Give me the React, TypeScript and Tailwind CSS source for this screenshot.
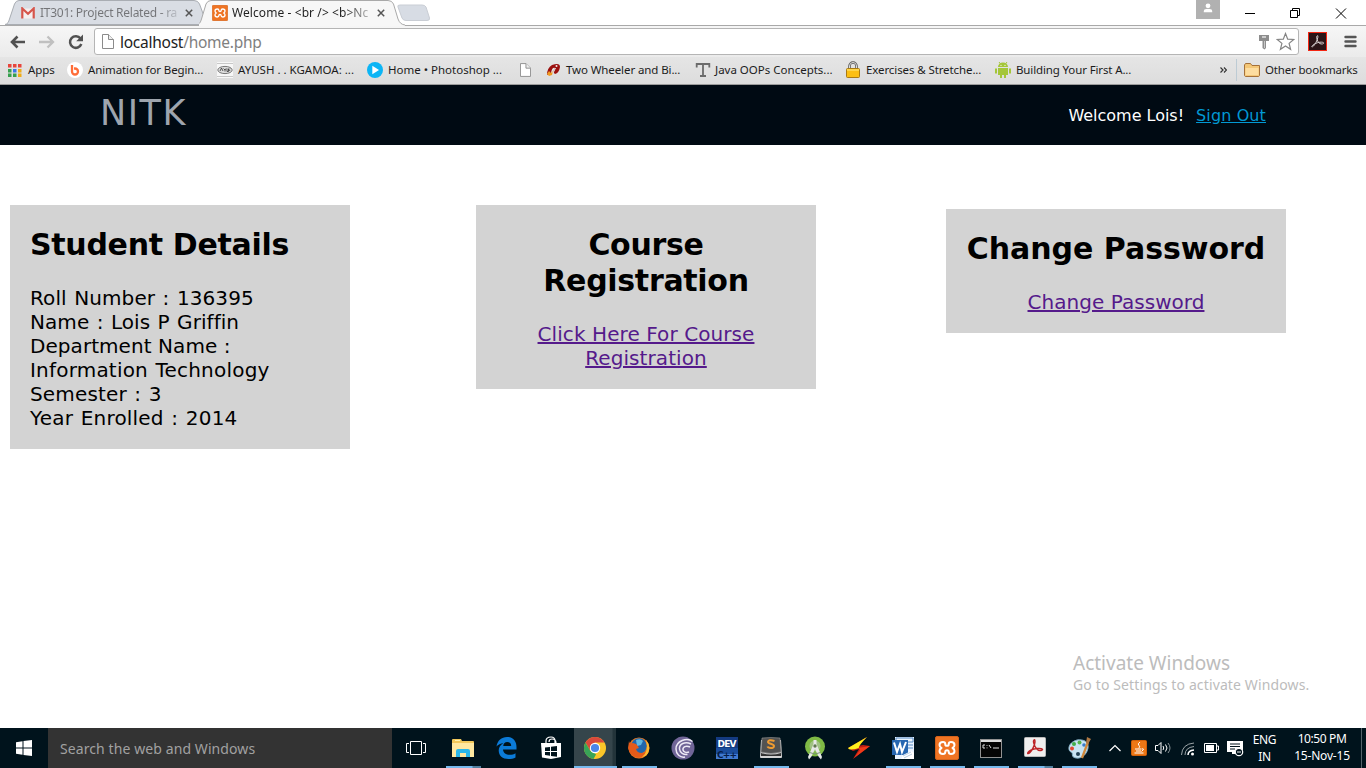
import type { ReactNode } from "react";

const UI = "font-['Noto_Sans','Open_Sans',sans-serif]";
const WEB = "font-['DejaVu_Sans',sans-serif]";

function Xampp({ size }: { size: number }) {
  return (
    <svg className="shrink-0" width={size} height={size} viewBox="0 0 24 24">
      <rect x=".5" y=".5" width="23" height="23" rx="1.500" fill="#ef7423" stroke="#d4631b" />
      <path d="M8 6Q4.500 6 4.500 9Q4.500 11 6.500 12Q4.500 13 4.500 15Q4.500 18 8 18Q10.300 18 10.300 15.800Q10.300 14.200 12 14.200T13.700 15.800Q13.700 18 16 18Q19.500 18 19.500 15Q19.500 13 17.500 12Q19.500 11 19.500 9Q19.500 6 16 6Q13.700 6 13.700 8.200Q13.700 9.800 12 9.800T10.300 8.200Q10.300 6 8 6z" fill="none" stroke="#fff" strokeWidth="2" strokeLinejoin="round" />
    </svg>
  );
}

function Page({ className = "" }: { className?: string }) {
  return (
    <svg className={className} width="12" height="15" viewBox="0 0 12 15">
      <path d="M.5.5h6l5 5v9H.5z" fill="#fff" stroke="#8b8b8b" />
      <path d="M6.500.5v5h5" fill="#eee" stroke="#8b8b8b" />
    </svg>
  );
}

function CloseX() {
  return (
    <svg width="8" height="8" viewBox="0 0 8 8">
      <path d="M.8.8l6.400 6.400M7.200.8L.8 7.200" stroke="#555" strokeWidth="1.500" />
    </svg>
  );
}

function TitleBar() {
  return (
    <div className="relative z-10 flex h-[25px] bg-white">
      <div className="relative ml-[5px] h-[25px] w-[194px] shrink-0">
        <svg className="absolute top-0 left-0" width="202" height="25" viewBox="0 0 202 25">
          <path d="M0 24.500C3 24 3.500 22 4.500 19L9.500 4Q11 .5 14 .5H189Q193 .5 194.500 4L200 19Q201 22 202 24.500z" fill="#d9dde4" stroke="#a9adb3" />
        </svg>
        <div className="relative flex h-[25px] items-center pl-[16px]">
          <svg width="14" height="12" viewBox="0 0 14 12">
            <path d="M1 1.500h12v10H1z" fill="#f5efef" />
            <path d="M1.300 11.500V1.500L7 6.700l5.700-5.200v10" fill="none" stroke="#d6554b" strokeWidth="2.200" />
          </svg>
          <div className={`${UI} ml-[5px] w-[139px] bg-gradient-to-r from-[#737477] from-85% to-[#c4c8d0] bg-clip-text text-[12px] tracking-[-0.26px] whitespace-nowrap text-transparent`}>
            IT301: Project Related - ra
          </div>
          <div className="ml-[6px]"><CloseX /></div>
        </div>
      </div>
      <div className="relative h-[25px] w-[196px] shrink-0">
        <svg className="absolute top-0 left-0" width="206" height="26" viewBox="0 0 206 26">
          <path d="M-3 25C1 24 1.500 22 2.500 19L7 4Q8.500.5 12 .5H189Q193 .5 194.500 4L199 19Q201 24.500 206 25V26H-3z" fill="#f7f7f7" />
          <path d="M-3 25C1 24 1.500 22 2.500 19L7 4Q8.500.5 12 .5H189Q193 .5 194.500 4L199 19Q201 24.500 206 25" fill="none" stroke="#a9a9a9" />
        </svg>
        <div className="relative flex h-[25px] items-center pl-[13px]">
          <Xampp size={16} />
          <div className={`${UI} ml-[4px] w-[139px] bg-gradient-to-r from-[#202020] from-80% to-[#c8c8c8] bg-clip-text text-[12px] tracking-[0.08px] whitespace-nowrap text-transparent`}>
            Welcome - &lt;br /&gt; &lt;b&gt;Nc
          </div>
          <div className="ml-[6px]"><CloseX /></div>
        </div>
      </div>
      <svg className="mt-[4px] ml-[2px] shrink-0" width="34" height="18" viewBox="0 0 34 18">
        <path d="M3 1H25Q28 1 29 3L32.500 14Q33 16.500 30 16.500H9Q6 16.500 5 14L1 3Q0 1 3 1z" fill="#d7dce4" stroke="#c9cdd4" />
      </svg>
      <div className="flex-1" />
      <div className="mr-[24px] flex h-[19px] w-[24px] shrink-0 justify-center bg-[#b1b1b1] pt-[3px]">
        <svg width="10" height="10" viewBox="0 0 10 10" fill="#fff">
          <circle cx="5" cy="2.800" r="2.400" />
          <path d="M.8 9.200V8q0-2 2.500-2h3.400q2.500 0 2.500 2v1.200z" />
        </svg>
      </div>
      <svg className="mt-[8px] mr-[16px] shrink-0" width="106" height="11" viewBox="0 0 106 11" fill="none" stroke="#000">
        <path d="M1 5.500h10" />
        <path d="M46.500 2.500h7v7h-7zM48.500 2.500v-2h7v7h-2" />
        <path d="M92 .5l10 10M102 .5l-10 10" />
      </svg>
    </div>
  );
}

function Toolbar() {
  return (
    <div className="flex h-[32px] shrink-0 items-center border-t border-[#a9a9a9] bg-gradient-to-b from-[#f6f6f6] to-[#ebebeb]">
      <svg className="ml-[9px]" width="76" height="18" viewBox="0 0 76 18" fill="none">
        <path d="M16 9H3M8.500 3.500L3 9l5.500 5.500" stroke="#515151" strokeWidth="2.600" />
        <path d="M30 9h13M38.500 3.500L44 9l-5.500 5.500" stroke="#c0c0c0" strokeWidth="2.300" />
        <path d="M71.500 5.600A5.800 5.800 0 1 0 72.300 11" stroke="#515151" strokeWidth="2.500" />
        <path d="M74 1.500v6.800h-6.800z" fill="#515151" />
      </svg>
      <div className="ml-[9px] flex h-[27px] w-[1205px] items-center rounded-[3px] border border-[#b5b5b5] bg-white">
        <Page className="ml-[7px]" />
        <div className={`${UI} ml-[6px] text-[15.500px] leading-[22px] tracking-[-0.26px] whitespace-nowrap text-[#222]`}>
          localhost<span className="text-[#808080]">/home.php</span>
        </div>
        <div className="flex-1" />
        <svg width="12" height="16" viewBox="0 0 12 16">
          <path d="M1 1h10v6H8v7l-1.500 1.500L4.500 14V7H1z" fill="#8d8d8d" />
          <path d="M4 3h4" stroke="#eee" strokeWidth="1.300" />
          <path d="M6.500 7v7" stroke="#c8c8c8" />
        </svg>
        <svg className="mr-[3px] ml-[6px]" width="19" height="19" viewBox="0 0 19 19">
          <path d="M9.500 1.500l2.200 5.600 6 .4-4.600 3.900 1.500 5.900-5.100-3.300-5.100 3.300 1.500-5.900L1.300 7.500l6-.4z" fill="#fff" stroke="#858585" strokeWidth="1.200" />
        </svg>
      </div>
      <svg className="ml-[9px]" width="19" height="19" viewBox="0 0 19 19">
        <rect x=".5" y=".5" width="18" height="18" fill="#2c1618" stroke="#f42613" />
        <path d="M9 4c-1 1 .5 5 1.500 6.500s4 2 5 1-1-1.500-3.500-1.300C9 10.500 6 12 4.500 13.500S4 15.500 5.500 14 9.500 8 9.800 5.500 9.500 3.500 9 4z" fill="none" stroke="#d5cfcf" strokeWidth="1" />
      </svg>
      <svg className="ml-[17px]" width="13" height="13" viewBox="0 0 13 13">
        <path d="M1.500 2h10M1.500 6.500h10M1.500 11h10" stroke="#555" strokeWidth="2.400" strokeLinecap="round" />
      </svg>
    </div>
  );
}

function Bookmark({ icon, width, children, text = "" }: { icon: ReactNode; width: string; children?: ReactNode; text?: string }) {
  return (
    <div className={`flex shrink-0 items-center ${width}`}>
      {icon}
      <span className={`whitespace-nowrap ${text}`}>{children}</span>
    </div>
  );
}

function Bookmarks() {
  return (
    <div className={`${UI} flex h-[28px] shrink-0 items-center border-b border-[#9b9b9b] bg-gradient-to-b from-[#e5e5e5] to-[#dddddd] pb-px pl-[8px] text-[11.500px] text-[#1c1c1c]`}>
      <Bookmark width="w-[59px]" text="ml-[6px] tracking-[-0.1px]" icon={
        <svg width="14" height="13" viewBox="0 0 14 13">
          <path d="M0 0h3.500v3.500H0zM5 0h3.500v3.500H5zM10 0h3.500v3.500H10z" fill="#e8453c" />
          <path d="M0 5h3.500v3.500H0zM0 9.500h3.500V13H0zM5 9.500h3.500V13H5z" fill="#36a04e" />
          <path d="M5 5h3.500v3.500H5z" fill="#3a78e7" />
          <path d="M10 5h3.500v3.500H10zM10 9.500h3.500V13H10z" fill="#f0ac16" />
        </svg>
      }>Apps</Bookmark>
      <Bookmark width="w-[150px]" text="ml-[5px] tracking-[-0.12px]" icon={
        <svg width="16" height="16" viewBox="0 0 16 16">
          <circle cx="8" cy="8" r="8" fill="#fff" />
          <path d="M5 3v6.500a3 3 0 1 0 3-3H7" fill="none" stroke="#ff6c37" strokeWidth="2.300" />
        </svg>
      }>Animation for Begin...</Bookmark>
      <Bookmark width="w-[150px]" text="ml-[5px] tracking-[0px]" icon={
        <svg width="16" height="16" viewBox="0 0 16 16">
          <rect width="16" height="16" fill="#f7f7f7" />
          <ellipse cx="8" cy="8" rx="7.200" ry="3.600" fill="#ddd" stroke="#777" />
          <path d="M3 9l1.500-3L6 9M6.500 6.500L8 8l1-1.500M8 8v1.500M10 6.500v3h1.500v-3M13 6.500l-1 1 1 1.500" stroke="#333" strokeWidth=".8" fill="none" />
          <path d="M0 1.500h16M0 14.500h16" stroke="#c8c8c8" />
        </svg>
      }>AYUSH . . KGAMOA: ...</Bookmark>
      <Bookmark width="w-[152px]" text="ml-[5px] tracking-[0px]" icon={
        <svg width="16" height="16" viewBox="0 0 16 16">
          <circle cx="8" cy="8" r="8" fill="#0cb5f5" /><path d="M5.300 3.800v8.400l6.700-4.200z" fill="#fff" />
        </svg>
      }>Home • Photoshop ...</Bookmark>
      <Bookmark width="w-[27px]" icon={<Page className="ml-px h-[14px] w-[11px]" />} />
      <Bookmark width="w-[149px]" text="ml-[4px] tracking-[-0.1px]" icon={
        <svg width="16" height="16" viewBox="0 0 16 16">
          <path d="M6 3Q14 0 14 5Q13 11 9 12L7 10 9 6Q6 5 5 11L1 13Q1 6 6 3z" fill="#9c100e" />
          <path d="M3 9L1 12l2 2 3-1 1-4-2 2z" fill="#f19b22" />
          <circle cx="10.500" cy="4" r="1" fill="#eee" /><path d="M9.500 6L7 11" stroke="#eee" />
        </svg>
      }>Two Wheeler and Bi...</Bookmark>
      <Bookmark width="w-[150px]" text="ml-[4px] tracking-[0px]" icon={
        <svg width="16" height="16" viewBox="0 0 16 16">
          <path d="M1.700 5.500V2h12.600v3.500M8 2v12M5 14h6" fill="none" stroke="#6b6b6b" strokeWidth="1.800" />
        </svg>
      }>Java OOPs Concepts...</Bookmark>
      <Bookmark width="w-[150px]" text="ml-[5px] tracking-[-0.1px]" icon={
        <svg width="16" height="18" viewBox="0 0 16 18">
          <path d="M4.500 8V5a3.500 3.500 0 0 1 7 0v3" fill="none" stroke="#555" strokeWidth="2.500" />
          <path d="M4.500 8V5a3.500 3.500 0 0 1 7 0v3" fill="none" stroke="#ddd" strokeWidth="1" />
          <rect x="1.500" y="7.500" width="13" height="9" rx="1" fill="#fcbf13" stroke="#a97a14" />
          <path d="M2 9h12" stroke="#ffec85" />
        </svg>
      }>Exercises &amp; Stretche...</Bookmark>
      <Bookmark width="w-[225px]" text="ml-[5px] tracking-[-0.13px]" icon={
        <svg width="16" height="16" viewBox="0 0 16 16" fill="#a4c639">
          <path d="M3 5a5 4.500 0 0 1 10 0zM3 6h10v7H3zM0 6.500h2v5H0zM14 6.500h2v5h-2zM5 13h2v3H5zM9 13h2v3H9z" />
          <path d="M4 0l2 2.500M12 0l-2 2.500" stroke="#a4c639" /><circle cx="6" cy="3.300" r=".6" fill="#fff" /><circle cx="10" cy="3.300" r=".6" fill="#fff" />
        </svg>
      }>Building Your First A...</Bookmark>
      <svg className="mr-[9px] shrink-0" width="7" height="6" viewBox="0 0 7 6">
        <path d="M.5.5L3 3 .5 5.500M4 .5L6.500 3 4 5.500" fill="none" stroke="#333" strokeWidth="1.200" />
      </svg>
      <div className="mr-[7px] h-[22px] w-px shrink-0 bg-[#bdcbd4]" />
      <svg className="mr-[5px] shrink-0" width="16" height="14" viewBox="0 0 16 14">
        <path d="M.5 12.500V2l1-1.500h5L8 2.500h7.500v10q-.5 1-1 1h-13q-.5 0-1-1z" fill="#f4c777" stroke="#a5713a" />
        <path d="M1.500 5h13v7h-13z" fill="#fddda0" />
      </svg>
      <span className="tracking-[-0.17px] whitespace-nowrap">Other bookmarks</span>
    </div>
  );
}

function Card({ title, className, children }: { title: string; className: string; children: ReactNode }) {
  return (
    <section className={`w-[340px] shrink-0 bg-[#d3d3d3] px-[20px] pt-[22px] pb-[19px] ${className}`}>
      <h1 className="mb-[23px] text-[30px] leading-[36px] font-bold">{title}</h1>
      <div className="text-[20px] leading-[24px]">{children}</div>
    </section>
  );
}

function Task({ children, bar = "", active = false }: { children: ReactNode; bar?: string; active?: boolean }) {
  return (
    <div className={`relative flex h-[40px] w-[44px] shrink-0 items-center justify-center pl-[1px] ${active ? "bg-[linear-gradient(90deg,transparent_2px,#35454b_2px,#35454b_40px,#23343a_41px)]" : ""}`}>
      {children}
      {bar && <div className={`absolute bottom-0 h-[2px] ${bar}`} />}
    </div>
  );
}

const BAR = "left-[6px] w-[35px] bg-[#76b9ed]";
const SPLIT = "left-[6px] w-[35px] bg-[linear-gradient(90deg,#76b9ed_26px,#52809f_27px)]";

function Taskbar() {
  return (
    <div className={`${UI} flex h-[40px] items-center bg-[#00131c] text-white`}>
      <div className="flex h-full w-[48px] shrink-0 items-center justify-center">
        <svg width="16" height="16" viewBox="0 0 16 16" fill="#fff">
          <path d="M0 2.200l6.500-.9v6.200H0zM7.500 1.100L16 0v7.500H7.500zM0 8.500h6.500v6.200L0 13.800zM7.500 8.500H16V16l-8.500-1.100z" />
        </svg>
      </div>
      <div className="flex h-full w-[344px] shrink-0 items-center bg-[#333333] pl-[12px] text-[14px] tracking-[0.09px] text-[#a1a1a1]">Search the web and Windows</div>
      <div className="flex w-[48px] shrink-0 justify-center">
        <svg width="20" height="14" viewBox="0 0 20 14" fill="none" stroke="#fff">
          <path d="M4.500.5h11v13h-11zM3 2.500H.5v9H3M17 2.500h2.500v9H17" />
        </svg>
      </div>

      <Task bar={SPLIT}>
        <svg width="22" height="18" viewBox="0 0 22 18">
          <path d="M0 1q0-1 1-1h8l1 2h11q1 0 1 1v15H0z" fill="#f2c85b" /><path d="M0 4h22v14H0z" fill="#ffe8a0" />
          <path d="M4 18v-6q0-2 2-2h10q2 0 2 2v6h-4v-4H8v4z" fill="#2bb7e9" /><path d="M3 1.500h5" stroke="#fff2ae" />
        </svg>
      </Task>
      <Task>
        <svg width="21" height="22" viewBox="0 0 21 22" fill="#0b7bd8">
          <path d="M.5 9.500C1.500 3.500 5.500 0 11 0c6.500 0 9.500 4.500 9.500 10v2.500H7c.3 3.500 3 5.300 6.500 5.300 2.500 0 4.500-.7 6-1.600v4.300C17.800 21.500 15 22 12.500 22 6.500 22 2.700 18.500 2.700 13.500c0-3.300 1.800-6 4.800-7.300C4.500 6.400 2 7.800.5 9.500zM7.200 9h8c0-2.700-1.500-4-4-4-2.200 0-3.700 1.500-4 4z" fillRule="evenodd" />
        </svg>
      </Task>
      <Task>
        <svg width="22" height="24" viewBox="0 0 22 24">
          <path d="M6 8V5q0-4 5-4 4 0 4 4v3M9 6q0-3 3-3 4 0 4 4" fill="none" stroke="#fff" strokeWidth="1.200" />
          <path d="M1 7h20v14l-10 2L2 21.500z" fill="#fff" />
          <path d="M5 11.500l5-.6v4H5zM11 10.800l6-.8v5h-6zM5 16h5v3.700L5 19zM11 16h6v4.700l-6-.8z" fill="#00131c" />
        </svg>
      </Task>
      <Task active bar="left-[2px] w-[43px] bg-[#76b9ed]">
        <svg width="22" height="22" viewBox="0 0 22 22">
          <circle cx="11" cy="11" r="11" fill="#fbc629" />
          <path d="M1.500 5.500A11 11 0 0 1 20.500 5.500H11L6.200 13.800z" fill="#d9493c" />
          <path d="M1.500 5.500L6.200 13.800 11 16.500l1 1L9.500 22A11 11 0 0 1 1.500 5.500z" fill="#39a457" />
          <circle cx="11" cy="11" r="5.200" fill="#fff" /><circle cx="11" cy="11" r="4.100" fill="#4b86e8" />
        </svg>
      </Task>
      <Task bar={BAR}>
        <svg width="24" height="24" viewBox="0 0 24 24">
          <circle cx="12" cy="12" r="10.500" fill="#e87820" /><circle cx="12" cy="10" r="7.800" fill="#2167ad" />
          <path d="M9 4q5-2 7 1l-2 4-4 1z" fill="#5eb8e2" />
          <path d="M2 5q0 3 4 2l3 1q2 2 3 4l-3 1q1 4 6 4 6-1 6-7 1 7-4 10-7 4-12-1T1.500 9z" fill="#e45b19" />
          <path d="M19 4q4 5 3 10-1 6-7 7 7-5 4-17z" fill="#f9bd33" />
        </svg>
      </Task>
      <Task>
        <svg width="24" height="24" viewBox="0 0 24 24" fill="none">
          <circle cx="12" cy="12" r="11.500" fill="#706597" />
          <path d="M21.500 5.500C16 1 5 5 5 13c0 5 4 9 9 8M20 8C14 5 8 8 8.500 13c.5 4 4 6 8 5.500M19 11c-4-2-7.500 0-7 3 .5 2 3 3 6 2" stroke="#eeeaf6" strokeWidth="1.500" />
        </svg>
      </Task>
      <Task>
        <svg width="22" height="22" viewBox="0 0 22 22">
          <rect width="22" height="22" fill="#143b82" /><path d="M0 11h22v11H0z" fill="#4079d1" /><path d="M0 11h22v6H0z" fill="#1a4c9b" />
          <text x="11" y="9.500" textAnchor="middle" fontFamily="DejaVu Sans" fontSize="9" fontWeight="700" fill="#fff" textLength="19">DEV</text>
          <text x="11" y="20.500" textAnchor="middle" fontFamily="DejaVu Sans" fontSize="9" fontWeight="700" fill="#061c46" textLength="20">C++</text>
        </svg>
      </Task>
      <Task bar={BAR}>
        <svg width="24" height="24" viewBox="0 0 24 24">
          <path d="M2 4h20l1 17q0 1-1 1H2q-1 0-1-1z" fill="#d3d3d3" /><path d="M3 2q9-1 18 0l1 14q-10 3-20 0z" fill="#525252" stroke="#999" strokeWidth=".6" /><path d="M2 17q10 3 20 0v3H2z" fill="#333" />
          <path d="M15.500 5q-6-2-6.500 1c0 2 6 1.500 6 4 0 3-6 2-6.500.5" stroke="#ef9b31" strokeWidth="2" fill="none" />
        </svg>
      </Task>
      <Task>
        <svg width="22" height="24" viewBox="0 0 22 24">
          <circle cx="11" cy="10.500" r="10" fill="#7fba45" />
          <circle cx="11" cy="10" r="5.500" fill="#a0c384" />
          <path d="M9.500 4h3v4l5.500 13-1 2.500-2.500-3L11 13l-3.500 7.500-2.500 3L4 21 9.500 8z" fill="#e7e9e8" /><circle cx="11" cy="10" r="1.700" fill="#607850" />
          <path d="M5.500 16.500q5.500 3 11 0" stroke="#799277" fill="none" />
        </svg>
      </Task>
      <Task>
        <svg width="24" height="24" viewBox="0 0 24 24">
          <path d="M20 1L1 12l5 3 6-2-6 10 17-13-7-1-5 1z" fill="#c01c12" />
          <path d="M20 1L1 12q1 3 11 0-1-2 8-11z" fill="#fff01e" /><path d="M11 12l12-2-16 12 6-8z" fill="#f03a19" />
        </svg>
      </Task>
      <Task bar={BAR}>
        <svg width="22" height="22" viewBox="0 0 22 22">
          <path d="M3 0h19v22H3z" fill="#e9f3ff" /><path d="M4 1h17v4H4zM15 8h6M15 11h6" fill="#eaf5ff" stroke="#548bc4" />
          <path d="M0 3h16v15H0z" fill="#2767b1" /><path d="M2 5.500l3 9.500 3-8 2 8 4-10" fill="none" stroke="#fff" strokeWidth="2" />
          <path d="M11 18l8-4 3 2v6H9z" fill="#fff" /><path d="M11 19l8-4M12 21l8-4" stroke="#b5cbe2" />
        </svg>
      </Task>
      <Task bar={BAR}><Xampp size={24} /></Task>
      <Task bar={BAR}>
        <svg width="22" height="19" viewBox="0 0 22 19">
          <rect x=".5" y=".5" width="21" height="18" fill="#050505" stroke="#929292" /><path d="M1 2h20" stroke="#ddd" strokeWidth="2" />
          <path d="M5 6H3v3h2M7 6v.8M7 8.500v.8M9 6l2 3M13 9h6" stroke="#e2e2e2" fill="none" />
        </svg>
      </Task>
      <Task bar={SPLIT}>
        <svg width="22" height="22" viewBox="0 0 22 22">
          <rect x=".5" y=".5" width="21" height="19" rx="1" fill="#efefef" stroke="#bbb" />
          <path d="M10 3c-1.500 1 .5 6 2 8s4 3 6 2-2-2-5-1.500C9 12 5 14 4 15.500s.5 1.500 2 0S11 8 11 5 10.500 2.700 10 3z" fill="none" stroke="#bd2326" strokeWidth="1.400" />
        </svg>
      </Task>
      <Task bar={BAR}>
        <svg width="24" height="24" viewBox="0 0 24 24">
          <path d="M10 4c7-1 12 2 11 8s-6 11-12 10-2-5-5-6-4-9 6-12z" fill="#c9e4f2" stroke="#84afc5" />
          <circle cx="7" cy="8" r="2" fill="#42ad4a" /><circle cx="12.500" cy="6.500" r="2" fill="#55b34d" /><circle cx="5" cy="12.500" r="2" fill="#e34733" /><circle cx="17" cy="9" r="1.800" fill="#387bca" /><circle cx="11" cy="18" r="2" fill="#244254" />
          <path d="M15 22l6-16" stroke="#d0893c" strokeWidth="2.300" /><path d="M19 7l1-6 4 2-3 5z" fill="#af7843" />
        </svg>
      </Task>
      <svg className="ml-[9px] shrink-0" width="12" height="8" viewBox="0 0 12 8"><path d="M.5 7L6 1.500 11.500 7" stroke="#fff" fill="none" strokeWidth="1.200" /></svg>
      <svg className="ml-[10px] shrink-0" width="16" height="16" viewBox="0 0 16 16">
        <rect x=".5" y=".5" width="15" height="15" rx="1" fill="#ed7716" stroke="#d15e08" />
        <path d="M9 2q-3 2-1 3.500T7.500 8M4 9h6M5 11h5M3.500 13h9M10.500 9q4-1 0 2.500" fill="none" stroke="#fff" strokeWidth="1" />
      </svg>
      <svg className="ml-[8px] shrink-0" width="17" height="14" viewBox="0 0 17 14" fill="none" stroke="#fff">
        <path d="M.5 4.500h2.500l3-3v11l-3-3H.5zM8 5q1.500 2 0 4M10.500 3.500q3 3.500 0 7" /><path d="M13 2q4 5 0 10" stroke="#899397" />
      </svg>
      <svg className="mt-[2px] ml-[9px] shrink-0" width="14" height="14" viewBox="0 0 14 14" fill="none" stroke="#9ba4a7">
        <path d="M.5 13Q1 2 13 1M4 13q0-7.500 9-8.500" strokeWidth="1" /><path d="M7 13q0-4.500 6-5" stroke="#fff" strokeWidth="1.500" /><circle cx="11.500" cy="12" r="1.500" fill="#fff" stroke="none" />
      </svg>
      <svg className="ml-[9px] shrink-0" width="15" height="10" viewBox="0 0 15 10"><path d="M.5.5h12v9H.5zM13 3h1.500v4H13" fill="none" stroke="#fff" /><path d="M2 2h8v6H2z" fill="#fff" /></svg>
      <svg className="ml-[8px] shrink-0" width="17" height="17" viewBox="0 0 17 17">
        <path d="M0 1h16v9H8v4H5v-2H0z" fill="#fff" /><path d="M3 4h10M3 6.500h10M3 9h5" stroke="#00131c" /><circle cx="12" cy="12" r="3.700" fill="#00131c" stroke="#fff" strokeWidth="1.200" /><path d="M10 12h4" stroke="#fff" />
      </svg>
      <div className="ml-[7px] flex w-[27px] shrink-0 flex-col items-center text-[12px] leading-[17px] tracking-[-0.4px]"><span>ENG</span><span>IN</span></div>
      <div className="ml-[13px] flex w-[62px] shrink-0 flex-col items-center pb-[2px] text-[12px] leading-[17px] tracking-[-0.4px] whitespace-nowrap"><span>10:50 PM</span><span className="tracking-[-0.2px]">15-Nov-15</span></div>
      <div className="ml-auto h-full w-px shrink-0 bg-[#54636a]" />
      <div className="w-[4px] shrink-0" />
    </div>
  );
}

export default function App() {
  return (
    <div className="flex h-[768px] w-[1366px] flex-col overflow-hidden bg-white">
      <div className="flex h-[85px] shrink-0 flex-col">
        <TitleBar />
        <Toolbar />
        <Bookmarks />
      </div>
      <header className={`${WEB} flex h-[60px] shrink-0 items-center justify-between bg-[#000a13] pr-[100px] pl-[100px]`}>
        <div className="pb-[4px] text-[35px] leading-[42px] tracking-[1.500px] text-[#9ea5ae]">NITK</div>
        <div className="flex gap-[12px] pt-[2px] text-[16px] leading-[20px] whitespace-nowrap">
          <span className="tracking-[-0.02px] text-white">Welcome Lois!</span>
          <a className="tracking-[0.12px] text-[#0299d3] underline">Sign Out</a>
        </div>
      </header>
      <main className={`${WEB} flex flex-1 items-start pt-[60px] pl-[10px] text-black`}>
        <Card title="Student Details" className="text-left tracking-[-0.3px]">
          <p className="tracking-[0.1px] [word-spacing:1px]">Roll Number : 136395</p>
          <p className="tracking-[0.06px] [word-spacing:1px]">Name : Lois P Griffin</p>
          <p className="tracking-[0.06px]">Department Name :</p>
          <p className="tracking-[0.2px] [word-spacing:1px]">Information Technology</p>
          <p className="tracking-[0.15px] [word-spacing:1px]">Semester : 3</p>
          <p className="tracking-[0.2px] [word-spacing:1px]">Year Enrolled : 2014</p>
        </Card>
        <Card title="Course Registration" className="ml-[126px] text-center tracking-[-0.3px]">
          <a className="tracking-[0.08px] text-[#551a8b] underline">Click Here For Course Registration</a>
        </Card>
        <Card title="Change Password" className="mt-[4px] ml-[130px] text-center tracking-[-0.03px] whitespace-nowrap">
          <a className="tracking-[0.04px] text-[#551a8b] underline">Change Password</a>
        </Card>
      </main>
      <aside className={`${UI} mb-[33px] ml-[1073px] shrink-0 whitespace-nowrap text-[#bcbcbc]`}>
        <div className="text-[19px] leading-[23px]">Activate Windows</div>
        <div className="text-[14px] leading-[20px] tracking-[0.13px]">Go to Settings to activate Windows.</div>
      </aside>
      <div className="shrink-0"><Taskbar /></div>
    </div>
  );
}
